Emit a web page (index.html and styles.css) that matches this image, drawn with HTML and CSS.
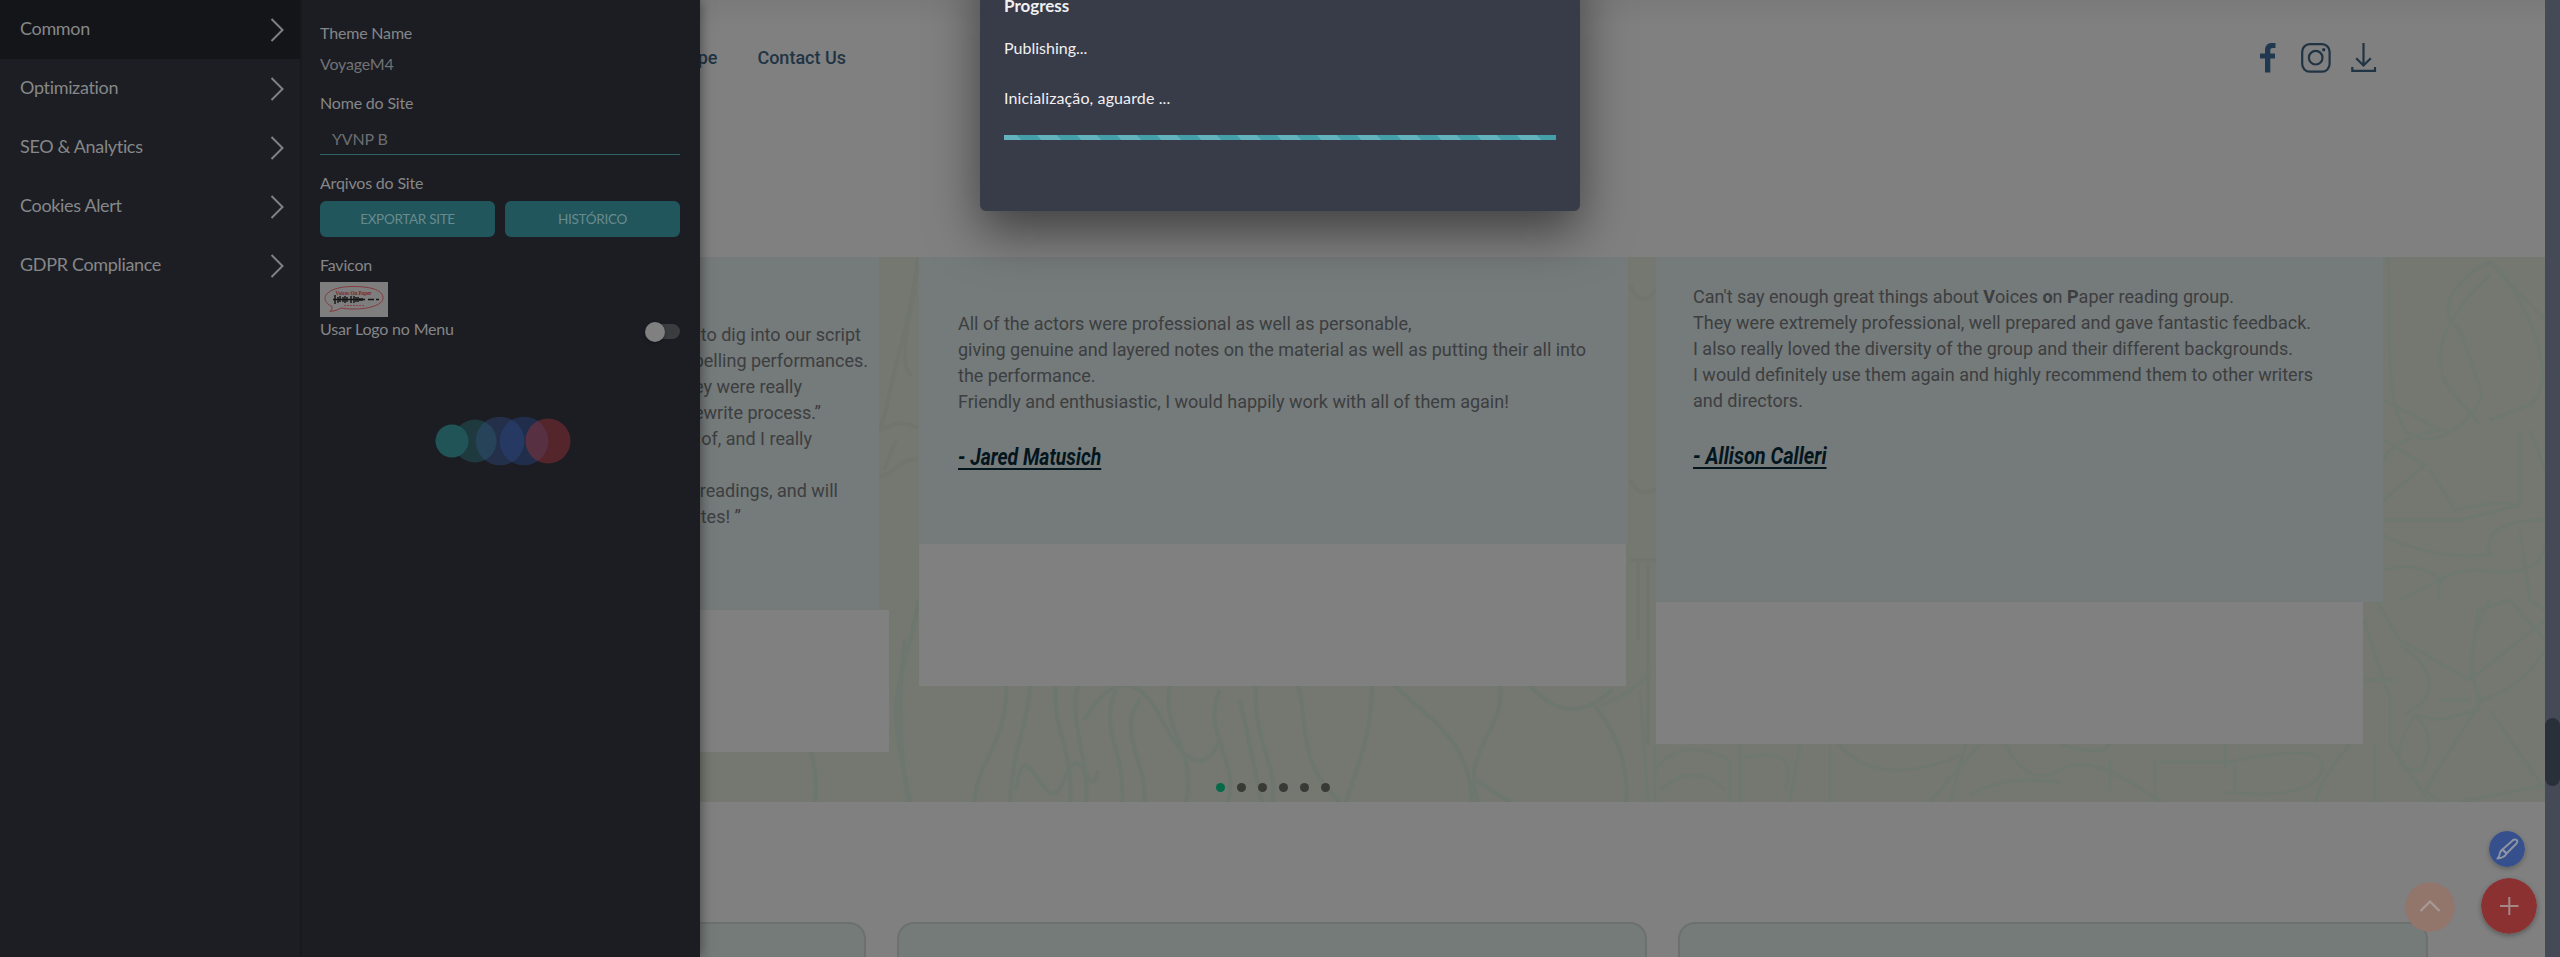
FILE: index.html
```html
<!DOCTYPE html>
<html lang="pt">
<head>
<meta charset="utf-8">
<title>VoyageM4 - YVNP B</title>
<link rel="stylesheet" href="styles.css">
</head>
<body>
<main class="page">
  <header class="site-header">
    <nav class="site-nav"><span>Landscape</span><span>Contact Us</span></nav>
    <div class="socials">
      <svg class="ic-fb" width="16" height="30" viewBox="0 0 16 30"><path d="M5 29.500V15.500H0V10.500H5V7.500C5 2.500 7.500 0 12 0H15.500V5H13C11 5 10.300 5.800 10.300 7.500V10.500H15V15.500H10.300V29.500Z" fill="#213950"/></svg>
      <svg class="ic-ig" width="30" height="30" viewBox="0 0 30 30" fill="none" stroke="#213444" stroke-width="2.200"><rect x="1.200" y="1.200" width="27.400" height="27.400" rx="7.500"/><circle cx="14.700" cy="14.700" r="6.800"/><circle cx="22.700" cy="6.700" r="1.700" fill="#213444" stroke="none"/></svg>
      <svg class="ic-dl" width="26" height="30" viewBox="0 0 26 30" fill="none" stroke="#213444" stroke-width="2.200"><path d="M12.500 0V22.500M5.200 15.200L12.500 22.500L19.800 15.200M1.300 24V27.900H24V24"/></svg>
    </div>
  </header>
  <section class="testimonials">
    <svg class="map" width="2545" height="545" viewBox="0 257 2545 545" fill="none" stroke="#6d776f" stroke-width="4">
      <g stroke="#70766d">
        <path d="M918 257C912 310 902 340 896 365S884 420 880 430M915 290C905 330 900 370 912 375M880 430C895 424 902 420 918 428M880 475C890 480 900 455 918 460M884 470L896 440"/>
        <path d="M1630 285Q1640 310 1656 290M1630 480Q1640 500 1656 488M1630 560H1656M1648 560V745M1638 560V640"/>
      </g>
      <path d="M918 600C915 640 893 680 896 720S912 800 910 802M905 640C898 690 898 740 908 802M811 752Q818 780 815 802M1006 686C1008 740 978 760 974 802M1030 686C1028 725 1012 750 1010 802M1056 686C1052 730 1074 750 1070 802M1078 686C1068 720 1090 760 1086 802M1116 690C1098 730 1126 750 1122 802M1140 700C1115 730 1150 770 1144 802M1170 686C1160 730 1198 750 1186 802M1220 690C1200 730 1240 760 1228 802M1240 700L1262 802M1256 686C1252 740 1280 770 1272 802M1298 686C1310 730 1296 760 1340 802M1372 686C1372 730 1360 760 1346 802M1395 686C1430 720 1470 740 1472 802M1500 686C1506 730 1460 750 1478 802M1530 686Q1570 730 1612 690M1595 706Q1630 750 1626 802M1475 780L1510 802M1016 790C1026 720 1046 830 1064 780S1090 810 1098 770M1084 720Q1126 650 1162 720T1220 740"/>
      <g stroke="#6f7870" stroke-width="3">
        <path d="M1600 706Q1645 686 1650 670M1655 745V802M1640 690L1648 802M1655 770Q1680 735 1730 760V802M1740 744V802M1660 790Q1695 760 1725 790M1745 758Q1800 745 1785 790M1800 744L1790 802M1830 744V802M1838 744Q1880 790 1960 755M1980 744L1930 802M1966 744L1950 802M2005 744Q2030 790 2060 770T2160 802M2060 744Q2110 760 2110 740M2110 760L2110 790M2155 762V800M2160 762H2230Q2330 740 2322 770T2225 792M2225 744V770M2235 765V792M1970 795Q2000 775 2060 782M2350 744Q2320 780 2316 802M2375 744V802M2390 744L2430 802"/>
        <path d="M2388 257C2392 320 2384 380 2400 420S2470 430 2482 395L2460 330C2430 310 2460 275 2490 262L2545 320M2490 275C2440 320 2430 360 2450 390L2480 425M2500 270C2530 310 2560 380 2530 405L2490 420M2384 400L2440 430Q2390 440 2384 460M2384 440L2425 465L2384 500M2430 470L2455 510Q2500 500 2520 505V430M2384 520H2460L2520 505M2384 535Q2430 560 2490 555Q2480 520 2545 520M2384 570Q2420 560 2440 580L2400 600M2440 600Q2430 570 2480 570Q2540 580 2545 545M2530 430L2545 470M2520 530L2530 600L2545 610"/>
        <path d="M2364 620L2390 700V744M2376 600L2400 640L2470 680L2478 610L2510 600L2545 640M2400 645Q2440 670 2425 700L2405 715M2364 680H2395M2470 680L2545 620M2478 690V710L2440 720L2415 715Q2380 770 2420 770Q2440 740 2415 715M2482 700L2425 790L2440 802M2490 710L2545 790M2490 600Q2460 650 2480 700Q2520 690 2545 650M2440 700H2470M2460 802L2545 785"/>
      </g>
    </svg>
    <div class="slides">
      <article class="slide slide-a">
        <div class="quote">
          <p class="e1">to dig into our script</p>
          <p>pelling performances.</p>
          <p class="e3">ey were really</p>
          <p class="e4">ewrite process.”</p>
          <p class="e5">of, and I really</p>
          <p>&nbsp;</p>
          <p class="e6">readings, and will</p>
          <p class="e7">tes! ”</p>
        </div>
        <div class="blank"></div>
      </article>
      <article class="slide slide-b">
        <div class="quote">
          <p>All of the actors were professional as well as personable,</p>
          <p>giving genuine and layered notes on the material as well as putting their all into</p>
          <p>the performance.</p>
          <p>Friendly and enthusiastic, I would happily work with all of them again!</p>
          <div class="author">- Jared Matusich</div>
        </div>
        <div class="blank"></div>
      </article>
      <article class="slide slide-c">
        <div class="quote">
          <p>Can't say enough great things about <b>V</b>oices <b>o</b>n <b>P</b>aper reading group.</p>
          <p>They were extremely professional, well prepared and gave fantastic feedback.</p>
          <p>I also really loved the diversity of the group and their different backgrounds.</p>
          <p>I would definitely use them again and highly recommend them to other writers</p>
          <p>and directors.</p>
          <div class="author">- Allison Calleri</div>
        </div>
        <div class="blank"></div>
      </article>
    </div>
    <div class="dots"><i class="on"></i><i></i><i></i><i></i><i></i><i></i></div>
  </section>
  <section class="tiles"><div class="tile"></div><div class="tile"></div><div class="tile"></div></section>
</main>

<div class="scrollbar"><div class="thumb"></div></div>

<svg class="fab fab-up" width="50" height="50" viewBox="0 0 50 50"><circle cx="25" cy="25" r="25" fill="#92756b"/><path d="M15.500 29L25 19.500L34.500 29" fill="none" stroke="#a69a96" stroke-width="2.200"/></svg>
<svg class="fab fab-edit" width="36" height="36" viewBox="0 0 36 36"><circle cx="18" cy="18" r="18" fill="#35508c"/><g fill="none" stroke="#8d93a3" stroke-width="2" stroke-linejoin="round"><path d="M13.500 18.500L24.500 8.800Q27 7.800 28.200 9.500Q28.800 10.800 27.500 12.500L17.500 22.500Z"/><path d="M13.500 18.500L17.500 22.500Q16 26.500 8.500 27.500Q10.500 25.500 10.800 22.500Q11.500 19.500 13.500 18.500Z"/></g></svg>
<svg class="fab fab-add" width="56" height="56" viewBox="0 0 56 56"><circle cx="28" cy="28" r="28" fill="#8b3132"/><path d="M19 28H37.500M28.300 19V37" stroke="#a48886" stroke-width="2"/></svg>

<aside class="panel">
  <nav class="menu">
    <div class="item active"><span>Common</span><svg width="14" height="24" viewBox="0 0 14 24"><path d="M1.500 1L12.500 12L1.500 23"/></svg></div>
    <div class="item"><span>Optimization</span><svg width="14" height="24" viewBox="0 0 14 24"><path d="M1.500 1L12.500 12L1.500 23"/></svg></div>
    <div class="item"><span>SEO &amp; Analytics</span><svg width="14" height="24" viewBox="0 0 14 24"><path d="M1.500 1L12.500 12L1.500 23"/></svg></div>
    <div class="item"><span>Cookies Alert</span><svg width="14" height="24" viewBox="0 0 14 24"><path d="M1.500 1L12.500 12L1.500 23"/></svg></div>
    <div class="item"><span>GDPR Compliance</span><svg width="14" height="24" viewBox="0 0 14 24"><path d="M1.500 1L12.500 12L1.500 23"/></svg></div>
  </nav>
  <div class="settings">
    <div>Theme Name</div>
    <div class="value">VoyageM4</div>
    <div class="l2">Nome do Site</div>
    <div class="field">YVNP B</div>
    <div class="l3">Arqivos do Site</div>
    <div class="buttons"><div class="btn">EXPORTAR SITE</div><div class="btn">HISTÓRICO</div></div>
    <div class="l4">Favicon</div>
    <svg class="favicon" width="68" height="35" viewBox="0 0 68 35"><rect width="68" height="35" fill="#7e7e7e"/><path d="M12 24.500C-2 18 5 4.500 33 4.500C58 4.500 63 11 63 16C63 22 52 27 33 27Q25 27 21 26Q17 29 10 29.500Q13 27 12 24.500Z" fill="none" stroke="#853a3e" stroke-width="1"/><text x="15.500" y="13" textLength="36" lengthAdjust="spacingAndGlyphs" class="fav-title">Voices On Paper</text><path d="M13 17.500H45M48 17.500H54M56 17.500H59M15 13V22M18 15V21M20 14V20M23 15V20M25 14V21M27 15V20M31 14V21M34 14V21M36 15V20M38 15V20M40 16V19M42 16V19" stroke="#151515" stroke-width="1.400"/><path d="M24 23.500H44" stroke="#854448" stroke-width="1" stroke-dasharray="2 1"/></svg>
    <div class="row"><span>Usar Logo no Menu</span><span class="toggle"></span></div>
    <svg class="loader" width="140" height="52" viewBox="0 0 140 52"><circle cx="40" cy="26" r="21.500" fill="#237070" opacity=".36"/><circle cx="65" cy="26" r="24.300" fill="#35548c" opacity=".36"/><circle cx="89" cy="26" r="24.300" fill="#29498e" opacity=".38"/><circle cx="113" cy="26" r="22.500" fill="#9a3338" opacity=".45"/><circle cx="17" cy="26" r="16.500" fill="#205457"/></svg>
  </div>
</aside>

<div class="modal">
  <div class="m1">Progress</div>
  <div class="m2">Publishing...</div>
  <div class="m3">Inicialização, aguarde ...</div>
  <div class="bar"></div>
</div>
</body>
</html>
```
FILE: styles.css
```css
* { box-sizing: border-box; }
body { margin: 0; position: relative; width: 2560px; height: 957px; overflow: hidden; background: #808080; font-family: Roboto, "Noto Sans", sans-serif; font-size: 18px; line-height: 26px; color: #3c3e3f; }
p { margin: 0; white-space: nowrap; }

.page { width: 2545px; height: 957px; overflow: hidden; }
.site-header { height: 257px; padding: 43px 168px 0 0; display: flex; justify-content: space-between; align-items: flex-start; background: linear-gradient(#7a7a7a, #808080 26px); }
.site-nav { width: 846px; padding-top: 2px; display: flex; justify-content: flex-end; gap: 40px; font-weight: 500; color: #213444; }
.socials { display: flex; }
.ic-fb { margin-right: 25px; }
.ic-ig { margin-right: 20px; }

.testimonials { position: relative; height: 545px; background: #757870; overflow: hidden; }
.map { position: absolute; left: 0; top: 0; }
.slides { position: relative; display: flex; align-items: flex-start; height: 487px; }
.slide .blank { height: 142px; background: #808080; }
.slide .quote { background: #757a7b; }
.slide-a { width: 889px; margin-right: 30px; }
.slide-a .quote { width: 879px; height: 353px; padding: 65px 11px 0 0; text-align: right; }
.slide-b { width: 707px; margin-right: 30px; }
.slide-b .quote { width: 709px; height: 287px; padding: 54px 0 0 39px; }
.slide-c { width: 707px; }
.slide-c .quote { width: 727px; height: 345px; padding: 27px 0 0 37px; }
.e1 { padding-right: 7px; }
.e3 { padding-right: 66px; }
.e4 { padding-right: 47px; }
.e5 { padding-right: 56px; }
.e6 { padding-right: 30px; }
.e7 { padding-right: 127px; }
.author { width: max-content; margin-top: 28px; font-size: 23px; line-height: 30px; font-weight: 700; font-style: italic; color: #04161d; text-decoration: underline; text-decoration-thickness: 2px; text-underline-offset: 3px; transform: scaleX(.842); transform-origin: 0 50%; }
.slide-c .author { transform: scaleX(.868); }
.dots { position: relative; display: flex; gap: 12px; padding: 39px 0 0 1216px; }
.dots i { width: 9px; height: 9px; border-radius: 50%; background: #383a35; }
.dots .on { background: #046a4a; }

.tiles { display: flex; gap: 31px; padding-top: 120px; margin-left: 116px; }
.tile { flex: none; width: 750px; height: 200px; border: 2px solid #6c7170; border-radius: 17px; background: #757b79; }

.scrollbar { position: absolute; right: 0; top: 0; width: 15px; height: 957px; padding-top: 718px; background: #454a56; }
.thumb { height: 68px; border-radius: 8px; background: #2a303a; }

.fab { position: absolute; border-radius: 50%; }
.fab-up { left: 2405px; top: 882px; }
.fab-edit { left: 2489px; top: 831px; box-shadow: 0 2px 5px rgba(0,0,0,.25); }
.fab-add { left: 2481px; top: 878px; box-shadow: 0 2px 5px rgba(0,0,0,.3); }

.panel { position: absolute; left: 0; top: 0; width: 700px; height: 957px; display: flex; background: #1c1d23; box-shadow: 0 0 12px rgba(0,0,0,.5); font-family: Lato, sans-serif; }
.menu { width: 302px; border-right: 2px solid #18191e; background: #1c1e23; }
.item { height: 59px; padding: 0 16px 0 20px; display: flex; align-items: center; justify-content: space-between; font-size: 18px; letter-spacing: -.33px; color: #868789; }
.item span { padding-bottom: 3px; }
.item.active { background: #131519; }
.item svg { fill: none; stroke: #808183; stroke-width: 2; }
.settings { flex: 1; padding: 23px 20px 0 18px; display: flex; flex-direction: column; font-size: 16px; line-height: 20px; letter-spacing: -.18px; color: #858688; }
.value { margin-top: 11px; color: #717274; }
.l2 { margin-top: 19px; }
.field { margin-top: 16px; padding-left: 12px; height: 26px; border-bottom: 1px solid #2e6365; color: #6c6d70; }
.l3 { margin-top: 18px; }
.buttons { display: flex; gap: 10px; margin-top: 8px; }
.btn { flex: 1; height: 36px; border-radius: 6px; background: #20565c; color: #6a8a8e; font-size: 13.5px; line-height: 36px; letter-spacing: -.3px; text-align: center; }
.l4 { margin-top: 18px; }
.favicon { margin-top: 7px; }
.fav-title { font: 700 6px "Liberation Serif", serif; letter-spacing: 0; fill: #7d2429; }
.row { display: flex; justify-content: space-between; margin-top: 2px; }
.toggle { position: relative; width: 30px; height: 15px; margin-top: 5px; border-radius: 8px; background: #3b3c3f; }
.toggle::before { content: ""; position: absolute; left: -5px; top: -2px; width: 20px; height: 20px; border-radius: 50%; background: #808080; box-shadow: 0 1px 3px rgba(0,0,0,.4); }
.loader { margin: 76px 0 0 115px; }

.modal { position: absolute; left: 980px; top: -40px; width: 600px; height: 251px; padding: 35px 24px 0; border-radius: 6px; background: #383b48; color: #f0f0f2; font-family: Lato, sans-serif; font-size: 16px; line-height: 22px; box-shadow: 0 20px 50px rgba(0,0,0,.5); }
.m1 { font-size: 17px; font-weight: 700; }
.m2 { margin-top: 20px; }
.m3 { margin-top: 28px; letter-spacing: .12px; }
.bar { height: 5px; margin-top: 26px; background: #43a0aa repeating-linear-gradient(-135deg, transparent 0 14.140px, #62b3bd 14.140px 28.280px); }
```
